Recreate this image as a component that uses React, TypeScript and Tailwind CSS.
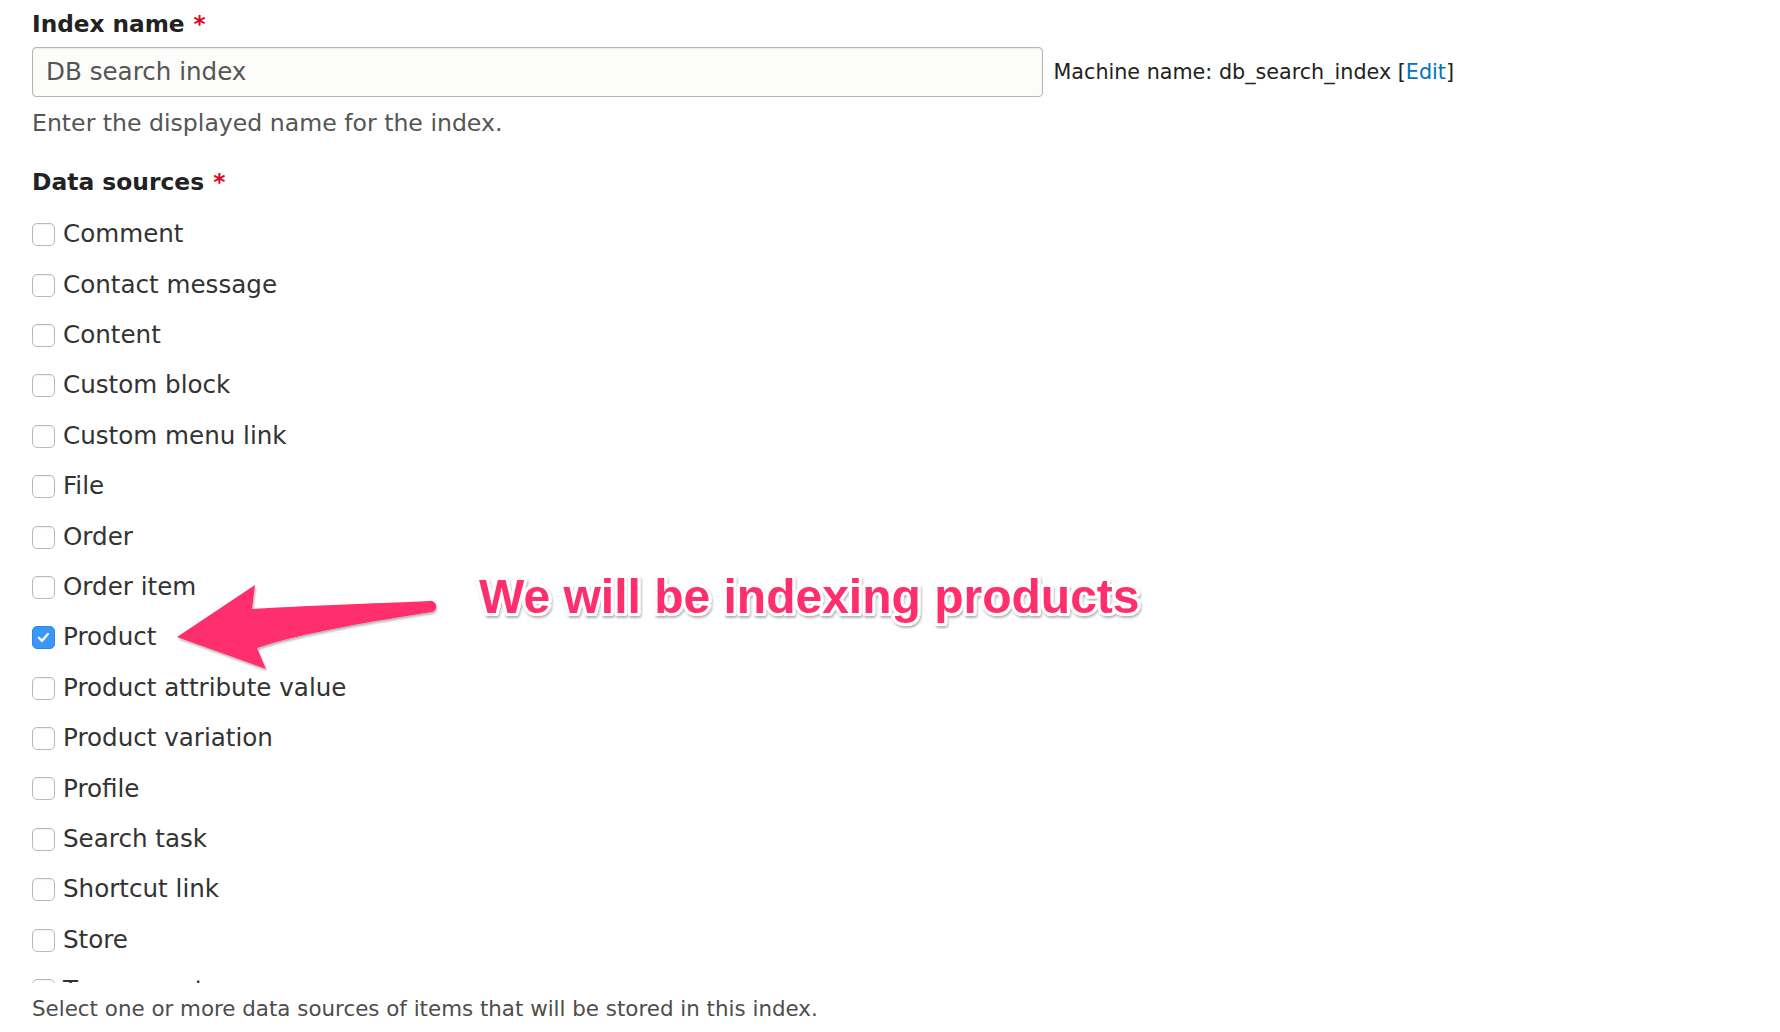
import React from "react";

const items: { label: string; checked?: boolean }[] = [
  { label: "Comment" },
  { label: "Contact message" },
  { label: "Content" },
  { label: "Custom block" },
  { label: "Custom menu link" },
  { label: "File" },
  { label: "Order" },
  { label: "Order item" },
  { label: "Product", checked: true },
  { label: "Product attribute value" },
  { label: "Product variation" },
  { label: "Profile" },
  { label: "Search task" },
  { label: "Shortcut link" },
  { label: "Store" },
  { label: "Taxonomy term" },
];

function Checkbox({ checked }: { checked?: boolean }) {
  if (checked) {
    return (
      <span className="flex h-[23px] w-[23px] shrink-0 items-center justify-center rounded-[5px] border border-[#2f87ea] bg-[#3a97f8]">
        <svg width="23" height="23" viewBox="0 0 23 23">
          <path d="M6.5 11.8 L9.8 15.2 L16.3 7.6" fill="none" stroke="white" strokeWidth="2.6" strokeLinecap="round" strokeLinejoin="round" />
        </svg>
      </span>
    );
  }
  return (
    <span className="block h-[23px] w-[23px] shrink-0 rounded-[5px] border border-[#b9b9b9] bg-white shadow-[inset_0_1px_2px_rgba(0,0,0,0.06)]" />
  );
}

export default function App() {
  return (
    <div className="relative h-[1032px] w-full overflow-hidden bg-white font-['DejaVu_Sans',sans-serif]">
      <div className="pl-8 pt-[10px]">
        <div className="flex h-[28px] items-center text-[23.2px] font-bold leading-[28px] text-[#222]">
          Index name
          <span className="ml-[9px] text-[#e2001a]">*</span>
        </div>
        <div className="mt-[8.5px] flex items-center">
          <div className="flex h-[50px] w-[1011px] items-center rounded-[4px] border border-[#b5b5b5] bg-[#fcfcfa] pl-[13px] pt-[2px] text-[24.6px] text-[#555] shadow-[inset_0_1px_2px_rgba(0,0,0,0.08)]">
            DB search index
          </div>
          <div className="ml-[10.5px] pt-[2px] text-[20.7px] text-[#222]">
            Machine name: db_search_index [<span className="text-[#0074bd]">Edit</span>]
          </div>
        </div>
        <div className="mt-[12.5px] h-[28px] text-[23.6px] leading-[28px] text-[#555]">
          Enter the displayed name for the index.
        </div>
        <div className="mt-[31px] flex h-[28px] items-center text-[23.4px] font-bold leading-[28px] text-[#222]">
          Data sources
          <span className="ml-[9px] text-[#e2001a]">*</span>
        </div>
        <div className="mt-[13.5px] h-[773px] overflow-hidden">
          {items.map((it) => (
            <div key={it.label} className="flex h-[50.4px] items-center gap-[8px]">
              <Checkbox checked={it.checked} />
              <span className="text-[24.6px] text-[#333]">{it.label}</span>
            </div>
          ))}
        </div>
        <div className="mt-[14px] text-[21.4px] leading-[24px] text-[#4d4d4d]">
          Select one or more data sources of items that will be stored in this index.
        </div>
      </div>

      <svg className="pointer-events-none absolute left-0 top-0" width="1780" height="1032" viewBox="0 0 1780 1032">
        <defs>
          <filter id="sh" x="-10%" y="-10%" width="120%" height="130%">
            <feDropShadow dx="1" dy="2" stdDeviation="1.2" floodColor="#000" floodOpacity="0.3" />
          </filter>
        </defs>
        <path
          d="M255 585 L252 609 C320 605 390 603 429 601 A5.6 5.6 0 0 1 432 612 C380 620 300 633 257 648 L266 669 L177 637 Z"
          fill="#ff2d6c"
          filter="url(#sh)"
        />
        <text
          x="479"
          y="613"
          fontFamily="'Liberation Sans', Arial, sans-serif"
          fontWeight="700"
          fontSize="48"
          fill="#ff2d6c"
          stroke="white"
          strokeWidth="6"
          strokeLinejoin="round"
          paintOrder="stroke"
          filter="url(#sh)"
        >
          We will be indexing products
        </text>
      </svg>
    </div>
  );
}
